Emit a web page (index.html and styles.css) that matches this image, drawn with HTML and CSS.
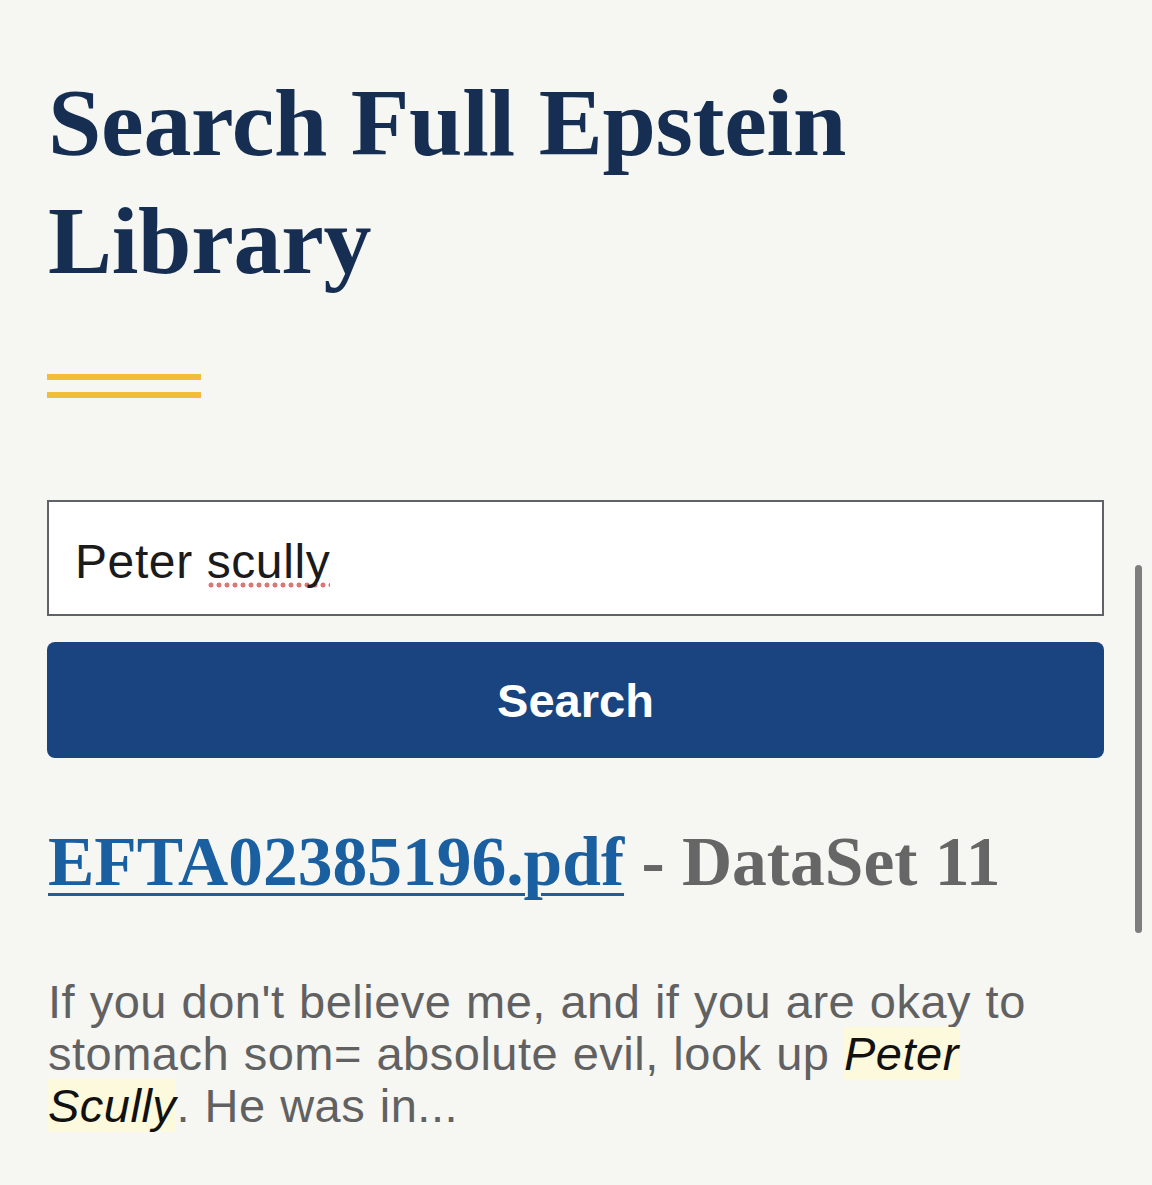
FILE: index.html
```html
<!DOCTYPE html>
<html lang="en">
<head>
<meta charset="utf-8">
<title>Search Full Epstein Library</title>
<link rel="stylesheet" href="styles.css">
</head>
<body>
<main class="page">
  <h1 class="title">Search Full Epstein Library</h1>
  <div class="rule">
    <span class="rule-bar"></span>
    <span class="rule-bar"></span>
  </div>
  <form class="search">
    <div class="search-input" role="textbox">Peter <span class="misspelled">scully</span></div>
    <button type="button" class="search-button">Search</button>
  </form>
  <section class="result">
    <h2 class="result-title"><a class="result-link" href="#">EFTA02385196.pdf</a> <span class="result-meta">- DataSet 11</span></h2>
    <p class="result-snippet">If you don't believe me, and if you are okay to stomach som= absolute evil, look up <mark class="hit">Peter Scully</mark>. He was in...</p>
  </section>
</main>
<div class="scrollbar"></div>
</body>
</html>
```
FILE: styles.css
```css
html {
  background: #f6f6f3;
}
body {
  margin: 0;
  min-height: 1185px;
  background: #f6f6f3;
  position: relative;
  overflow: hidden;
}
.page {
  padding: 64px 48px 0 48px;
  display: flex;
  flex-direction: column;
}
.title {
  margin: 0;
  font-family: "Liberation Serif", serif;
  font-weight: 700;
  font-size: 96px;
  line-height: 118px;
  color: #162e51;
  letter-spacing: -0.3px;
}
.rule {
  margin-top: 74px;
  display: flex;
  flex-direction: column;
  gap: 12px;
}
.rule-bar {
  display: block;
  width: 154px;
  height: 6px;
  margin-left: -1px;
  background: #f2bd3c;
}
.search {
  margin-top: 102px;
  display: flex;
  flex-direction: column;
  gap: 26px;
}
.search-input {
  box-sizing: border-box;
  height: 116px;
  margin-left: -1px;
  border: 2px solid #5f6266;
  background: #ffffff;
  padding: 32px 24px 0 26px;
  font-family: "Liberation Sans", Arial, sans-serif;
  font-size: 48px;
  line-height: 55px;
  color: #1b1b1b;
  letter-spacing: 0.6px;
}
.misspelled {
  background-image: radial-gradient(circle, #e07575 2.2px, transparent 2.8px);
  background-repeat: repeat-x;
  background-position: left bottom;
  background-size: 8px 6px;
}
.search-button {
  box-sizing: border-box;
  height: 116px;
  margin-left: -1px;
  border: 0;
  border-radius: 8px;
  background: #1a4480;
  color: #ffffff;
  font-family: "Liberation Sans", Arial, sans-serif;
  font-weight: 700;
  font-size: 47px;
  display: flex;
  align-items: center;
  justify-content: center;
  padding: 0;
}
.result {
  margin-top: 63px;
}
.result-title {
  margin: 0;
  font-family: "Liberation Serif", serif;
  font-weight: 700;
  font-size: 69.5px;
  line-height: 82px;
}
.result-link {
  color: #1a5fa0;
  text-decoration: underline;
  text-decoration-thickness: 3px;
  text-underline-offset: 8px;
}
.result-meta {
  color: #666666;
}
.result-snippet {
  margin: 73px 0 0 0;
  font-family: "Liberation Sans", Arial, sans-serif;
  font-size: 47px;
  line-height: 52px;
  letter-spacing: 0.5px;
  word-spacing: 1px;
  color: #616161;
}
.hit {
  background: #fdf9dc;
  color: #111111;
  font-style: italic;
}
.scrollbar {
  position: absolute;
  left: 1135px;
  top: 565px;
  width: 7px;
  height: 368px;
  border-radius: 4px;
  background: #7e7e7e;
}
```
